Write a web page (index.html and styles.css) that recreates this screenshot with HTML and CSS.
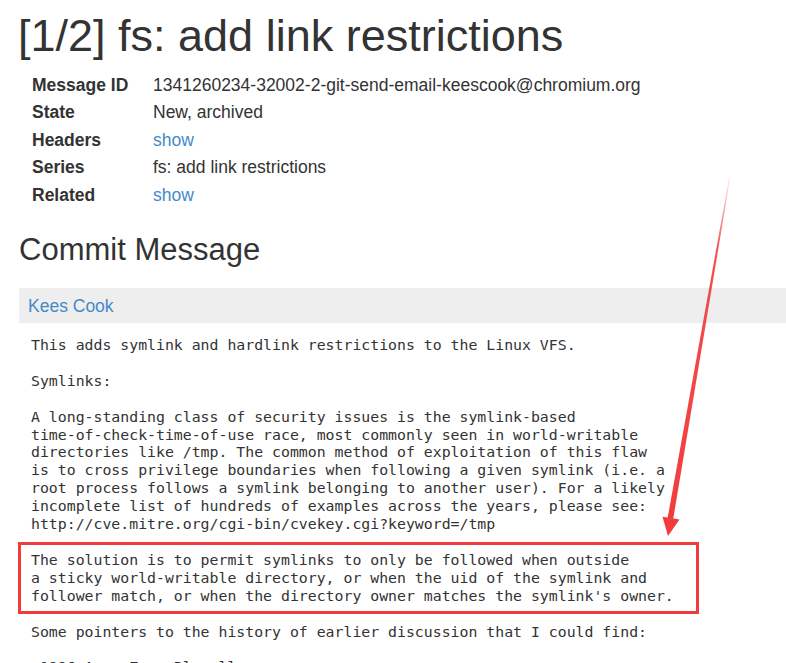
FILE: index.html
```html
<!DOCTYPE html>
<html lang="en">
<head>
<meta charset="utf-8">
<title>[1/2] fs: add link restrictions</title>
<link rel="stylesheet" href="styles.css">
</head>
<body>
<div class="page">
  <h1 class="title">[1/2] fs: add link restrictions</h1>
  <table class="meta">
    <tr><th>Message ID</th><td>1341260234-32002-2-git-send-email-keescook@chromium.org</td></tr>
    <tr><th>State</th><td>New, archived</td></tr>
    <tr><th>Headers</th><td><a href="#">show</a></td></tr>
    <tr><th>Series</th><td>fs: add link restrictions</td></tr>
    <tr><th>Related</th><td><a href="#">show</a></td></tr>
  </table>
  <h2 class="section">Commit Message</h2>
  <div class="submitter"><a href="#">Kees Cook</a></div>
<pre class="content">
This adds symlink and hardlink restrictions to the Linux VFS.

Symlinks:

A long-standing class of security issues is the symlink-based
time-of-check-time-of-use race, most commonly seen in world-writable
directories like /tmp. The common method of exploitation of this flaw
is to cross privilege boundaries when following a given symlink (i.e. a
root process follows a symlink belonging to another user). For a likely
incomplete list of hundreds of examples across the years, please see:
http://cve.mitre.org/cgi-bin/cvekey.cgi?keyword=/tmp

The solution is to permit symlinks to only be followed when outside
a sticky world-writable directory, or when the uid of the symlink and
follower match, or when the directory owner matches the symlink's owner.

Some pointers to the history of earlier discussion that I could find:

 1996 Aug, Zygo Blaxell
</pre>
</div>
<svg class="annotation" width="786" height="663" viewBox="0 0 786 663" xmlns="http://www.w3.org/2000/svg">
  <defs>
    <linearGradient id="fade" x1="0" y1="178" x2="0" y2="535" gradientUnits="userSpaceOnUse">
      <stop offset="0" stop-color="#f23b3b" stop-opacity="0.1"/>
      <stop offset="0.2" stop-color="#f23b3b" stop-opacity="0.9"/>
      <stop offset="1" stop-color="#f23b3b" stop-opacity="1"/>
    </linearGradient>
  </defs>
  <rect x="19.5" y="543.5" width="678" height="69" fill="none" stroke="#f23b3b" stroke-width="3"/>
  <polygon fill="url(#fade)" points="729.1,178 730.1,178.2 673.2,519 667.6,518"/>
  <polygon fill="#f23b3b" points="679.5,519.6 668,536 662.5,516.8"/>
</svg>
</body>
</html>
```
FILE: styles.css
```css
html, body {
  margin: 0;
  padding: 0;
  overflow: hidden;
  background: #fff;
}

body {
  font-family: "Liberation Sans", Arial, sans-serif;
  font-size: 17.5px;
  line-height: 25px;
  color: #333;
  position: relative;
}

a {
  color: #428bca;
  text-decoration: none;
}

.page {
  padding: 0 0 0 19px;
}

.title {
  margin: 11px 0 0 -1px;
  font-size: 45px;
  line-height: 49.5px;
  font-weight: normal;
}

.meta {
  margin-top: 11px;
  border-collapse: collapse;
}

.meta th,
.meta td {
  padding: 0;
  line-height: 27.5px;
  text-align: left;
  vertical-align: top;
}

.meta th {
  font-weight: bold;
  padding-left: 13px;
  width: 121px;
}

.section {
  margin: 24px 0 0;
  font-size: 31px;
  line-height: 34px;
  font-weight: normal;
}

.submitter {
  margin-top: 21px;
  background: #eee;
  padding: 6px 8px 4px 9px;
  line-height: 25px;
}

.content {
  margin: 13px 0 0;
  padding: 0 0 0 12px;
  font-family: "DejaVu Sans Mono", "Liberation Mono", monospace;
  font-size: 14.83px;
  line-height: 17.9px;
  color: #333;
  white-space: pre;
}

.annotation {
  position: absolute;
  top: 0;
  left: 0;
  pointer-events: none;
}
```
